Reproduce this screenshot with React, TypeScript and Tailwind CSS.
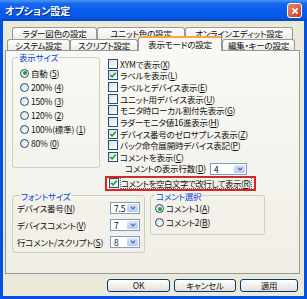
import React from 'react';

const font = "font-['Noto_Sans_CJK_JP','Noto_Sans',sans-serif] [font-feature-settings:'palt']";
const txt = 'text-[8.5px] tracking-[-0.2px] leading-none';

const Mn = ({ k }: { k: string }) => (
  <>
    (<u>{k}</u>)
  </>
);

const CheckBox = ({ checked }: { checked?: boolean }) => (
  <span className="w-[10px] h-[10px] shrink-0 border border-[#1c5180] bg-linear-to-br from-[#dcdcd7] to-white flex items-center justify-center">
    {checked && (
      <svg viewBox="0 0 8 8" className="w-[8px] h-[8px]">
        <path d="M1.2 4 L3.1 5.9 L6.8 1.8" stroke="#21a121" strokeWidth="1.6" fill="none" />
      </svg>
    )}
  </span>
);

const Radio = ({ on }: { on?: boolean }) => (
  <span className="w-[9px] h-[9px] shrink-0 rounded-full border border-[#1c5180] bg-linear-to-br from-[#dcdcd7] to-white flex items-center justify-center">
    {on && <span className="w-[4px] h-[4px] rounded-full bg-[#21a121]" />}
  </span>
);

const Combo = ({ value, className }: { value: string; className: string }) => (
  <div className={'flex h-[12px] border border-[#7f9db9] bg-white ' + className}>
    <span className={'flex-1 pl-[3px] pt-[1px] ' + txt}>{value}</span>
    <span className="w-[11px] m-[1px] rounded-[1px] bg-linear-to-b from-[#dbe5fb] to-[#b4c8f5] flex items-center justify-center">
      <svg viewBox="0 0 7 5" className="w-[6px] h-[4px]">
        <path d="M0.8 0.8 L3.5 3.6 L6.2 0.8" stroke="#4d6185" strokeWidth="1.4" fill="none" />
      </svg>
    </span>
  </div>
);

const Tab = ({ label, className }: { label: string; className: string }) => (
  <div
    className={
      'flex items-center justify-center border border-b-0 border-[#919b9c] rounded-t-[3px] bg-linear-to-b from-white to-[#ecebe6] ' +
      txt +
      ' ' +
      className
    }
  >
    {label}
  </div>
);

const Btn = ({ children, className }: { children: React.ReactNode; className: string }) => (
  <div
    className={
      'h-[13px] flex items-center justify-center border border-[#003c74] rounded-[3px] bg-linear-to-b from-white to-[#e3e0d6] ' +
      txt +
      ' ' +
      className
    }
  >
    {children}
  </div>
);

const checks: [string, string, boolean][] = [
  ['XYMで表示', 'X', false],
  ['ラベルを表示', 'L', true],
  ['ラベルとデバイス表示', 'E', false],
  ['ユニット用デバイス表示', 'U', false],
  ['モニタ時ローカル割付先表示', 'G', false],
  ['ラダーモニタ値16進表示', 'H', false],
  ['デバイス番号のゼロサプレス表示', 'Z', true],
  ['バック命令展開時デバイス表記', 'P', false],
  ['コメントを表示', 'C', true],
];

const sizes: [string, string, boolean][] = [
  ['自動 ', '5', true],
  ['200% ', '4', false],
  ['150% ', '3', false],
  ['120% ', '2', false],
  ['100%(標準) ', '1', false],
  ['80% ', '0', false],
];

const fonts: [string, string, string][] = [
  ['デバイス番号', 'N', '7.5'],
  ['デバイスコメント', 'V', '7'],
  ['行コメント/スクリプト', 'S', '8'],
];

export default function App() {
  return (
    <div className={'w-[307px] h-[299px] flex flex-col bg-[#0353e3] text-[#111] ' + font}>
      {/* title bar */}
      <div className="h-[21px] shrink-0 flex items-center justify-between pl-[5px] pr-[5px] bg-[linear-gradient(to_bottom,#4a95f6_0%,#1468ec_18%,#0a5cee_50%,#0557e6_85%,#0046c9_100%)]">
        <span className="text-white font-bold text-[10px] leading-none [text-shadow:1px_1px_0_#0a2a8a]">オプション設定</span>
        <span className="w-[15px] h-[15px] rounded-[3px] border border-white bg-linear-to-br from-[#eb8a6c] to-[#c6381c] flex items-center justify-center">
          <svg viewBox="0 0 9 9" className="w-[8px] h-[8px]">
            <path d="M1.5 1.5 L7.5 7.5 M7.5 1.5 L1.5 7.5" stroke="white" strokeWidth="1.8" />
          </svg>
        </span>
      </div>

      {/* body */}
      <div className="flex-1 mx-[3px] mb-[3px] bg-[#ece9d8] flex flex-col pt-[6px]">
        {/* tabs */}
        <div className="flex h-[12px] ml-[9px]">
          <Tab label="ラダー図色の設定" className="w-[85px] h-[12px]" />
          <Tab label="ユニット色の設定" className="w-[88px] h-[12px]" />
          <Tab label="オンラインエディット設定" className="w-[108px] h-[12px]" />
        </div>
        <div className="flex items-end h-[11px] ml-[4px] relative z-10">
          <Tab label="システム設定" className="w-[63px] h-[11px]" />
          <Tab label="スクリプト設定" className="w-[68px] h-[11px]" />
          <div
            className={
              'w-[84px] h-[15px] -mb-[1px] flex items-center justify-center border border-b-0 border-[#919b9c] border-t-2 border-t-[#f6a93b] rounded-t-[3px] bg-[#f9f8f4] ' +
              txt
            }
          >
            表示モードの設定
          </div>
          <Tab label="編集・キーの設定" className="w-[73px] h-[11px]" />
        </div>

        {/* panel */}
        <div className="h-[224px] ml-[2px] mr-[4px] border border-[#919b9c] bg-linear-to-b from-[#f9f8f4] to-[#f0eee6] flex flex-col pt-[1px]">
          <div className="flex">
            <fieldset className="ml-[6px] w-[88px] h-[116px] border border-[#d0d0bf] rounded-[3px]">
              <legend className="ml-[5px] px-[1px] text-[8.5px] tracking-[-0.2px] leading-[10px] text-[#0046d5]">
                表示サイズ
              </legend>
              <div className="flex flex-col pt-[4px] pl-[7px]">
                {sizes.map(([t, k, on]) => (
                  <div key={t} className={'h-[14px] flex items-center gap-[2px] whitespace-nowrap ' + txt}>
                    <Radio on={on} />
                    <span>
                      {t}
                      <Mn k={k} />
                    </span>
                  </div>
                ))}
              </div>
            </fieldset>

            <div className="ml-[8px] pt-[6px] flex flex-col">
              {checks.map(([t, k, c]) => (
                <div key={t} className={'h-[11.67px] flex items-center gap-[2px] whitespace-nowrap ' + txt}>
                  <CheckBox checked={c} />
                  <span>
                    {t}
                    <Mn k={k} />
                  </span>
                </div>
              ))}
              <div className={'h-[11.67px] flex items-center pl-[17px] whitespace-nowrap ' + txt}>
                <span className="w-[85px]">
                  コメントの表示行数<Mn k="D" />
                </span>
                <Combo value="4" className="w-[37px]" />
              </div>
            </div>
          </div>

          {/* highlighted option */}
          <div className="ml-[99px] mt-[1px] w-[151px] h-[15px] border-2 border-[#dd2222] flex items-center pl-[2px] gap-[1px] whitespace-nowrap text-[8.5px] tracking-[-0.5px] leading-none">
            <CheckBox checked />
            <span className="border border-dotted border-[#666] py-[1px]">
              コメントを空白文字で改行して表示<Mn k="R" />
            </span>
          </div>

          <div className="flex gap-[5px] ml-[6px]">
            <fieldset className="w-[133px] h-[62px] border border-[#d0d0bf] rounded-[3px]">
              <legend className="ml-[7px] px-[1px] text-[8.5px] tracking-[-0.2px] leading-[10px] text-[#0046d5]">
                フォントサイズ
              </legend>
              <div className="flex flex-col pl-[4px] -mt-[1px]">
                {fonts.map(([t, k, v]) => (
                  <div key={t} className={'h-[17px] flex items-center whitespace-nowrap ' + txt}>
                    <span className="w-[93px]">
                      {t}
                      <Mn k={k} />
                    </span>
                    <Combo value={v} className="w-[30px]" />
                  </div>
                ))}
              </div>
            </fieldset>
            <fieldset className="w-[115px] h-[44px] border border-[#d0d0bf] rounded-[3px]">
              <legend className="ml-[4px] px-[1px] text-[8.5px] tracking-[-0.2px] leading-[10px] text-[#0046d5]">
                コメント選択
              </legend>
              <div className="flex flex-col pl-[4px] pt-[1px]">
                <div className={'h-[14px] flex items-center gap-[2px] ' + txt}>
                  <Radio on />
                  <span>
                    コメント1<Mn k="A" />
                  </span>
                </div>
                <div className={'h-[14px] flex items-center gap-[2px] ' + txt}>
                  <Radio />
                  <span>
                    コメント2<Mn k="B" />
                  </span>
                </div>
              </div>
            </fieldset>
          </div>
        </div>

        {/* buttons */}
        <div className="flex justify-end gap-[4px] pr-[6px] mt-[5px]">
          <Btn className="w-[63px]">OK</Btn>
          <Btn className="w-[62px]">キャンセル</Btn>
          <Btn className="w-[58px]">適用</Btn>
        </div>
      </div>
    </div>
  );
}
